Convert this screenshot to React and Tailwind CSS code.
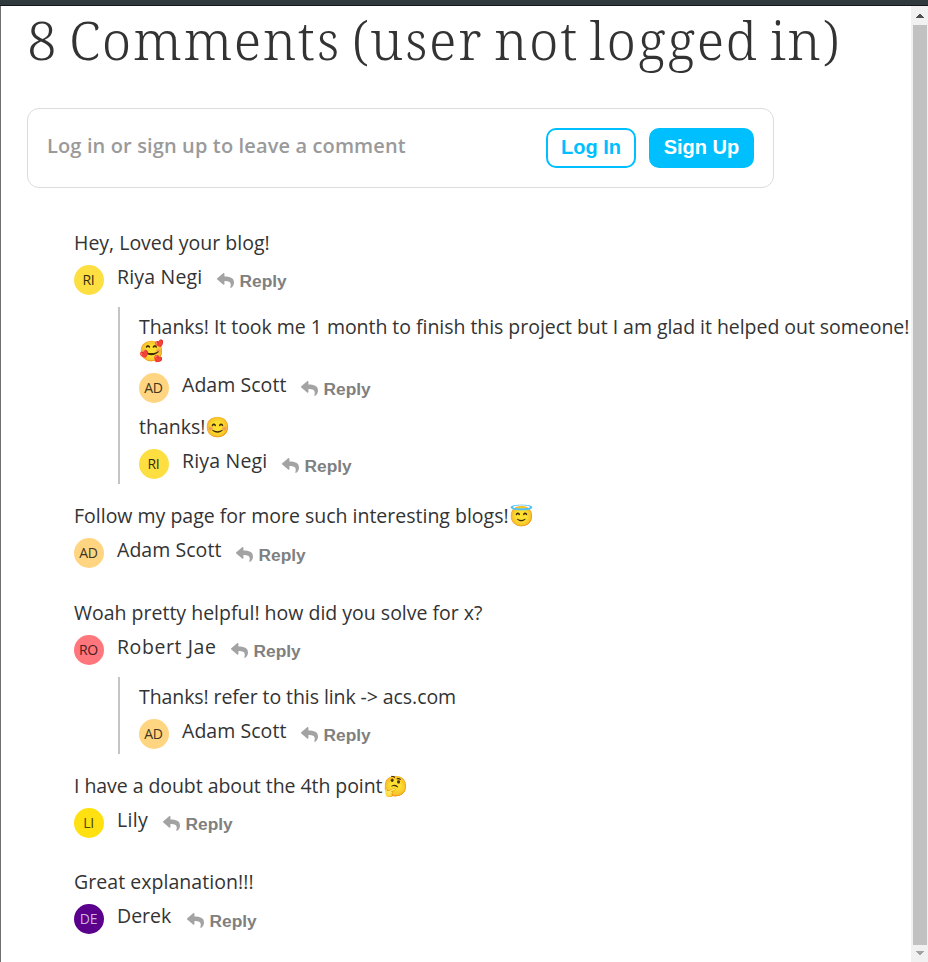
import { FaReply } from "react-icons/fa";

const people = {
  riya: { name: "Riya Negi", initials: "RI", avatar: "bg-[#fddf42] text-[#332d0d]", nameBox: "w-[85px] tracking-[0.18px]" },
  adam: { name: "Adam Scott", initials: "AD", avatar: "bg-[#ffd581] text-[#403520]", nameBox: "w-[104px] tracking-[0.05px]" },
  robert: { name: "Robert Jae", initials: "RO", avatar: "bg-[#ff767c] text-[#4a2022]", nameBox: "w-[99px] tracking-[0.58px]" },
  lily: { name: "Lily", initials: "LI", avatar: "bg-[#ffe011] text-[#4d4305]", nameBox: "w-[31px] tracking-[0.3px]" },
  derek: { name: "Derek", initials: "DE", avatar: "bg-[#5b008c] text-[#cdb3dc]", nameBox: "w-[55px]" },
};

const thread = [
  {
    by: "riya",
    text: "Hey, Loved your blog!",
    gap: "mb-5",
    replies: [
      {
        by: "adam",
        text: "Thanks! It took me 1 month to finish this project but I am glad it helped out someone!",
        spacing: "tracking-[-0.04px]",
        emoji: "🥰",
        wrap: true,
        gap: "pb-3",
      },
      { by: "riya", text: "thanks!", emoji: "😊", gap: "pb-[5px]", low: true },
    ],
  },
  {
    by: "adam",
    text: "Follow my page for more such interesting blogs!",
    emoji: "😇",
    gap: "mb-[33px]",
    low: true,
  },
  {
    by: "robert",
    text: "Woah pretty helpful! how did you solve for x?",
    gap: "mb-5",
    replies: [
      { by: "adam", text: "Thanks! refer to this link -> acs.com", spacing: "tracking-[-0.08px]", gap: "pb-[5px]" },
    ],
  },
  { by: "lily", text: "I have a doubt about the 4th point", spacing: "tracking-[-0.06px]", emoji: "🤔", gap: "mb-8" },
  { by: "derek", text: "Great explanation!!!", spacing: "tracking-[0.05px]", gap: "mb-0", low: true },
];

function Body({ comment }) {
  const person = people[comment.by];
  return (
    <>
      <p className={`whitespace-nowrap text-[19.5px] leading-6 ${comment.spacing ?? ""}`}>
        <span className={comment.wrap ? "block h-6" : ""}>{comment.text}</span>
        {comment.emoji && (
          <span className="inline-block h-6 align-top text-[20px] leading-[23px] tracking-normal">{comment.emoji}</span>
        )}
      </p>
      <div className="mt-2.5 flex h-[30px] items-start">
        <div
          className={`flex size-[30px] shrink-0 items-center justify-center rounded-full pr-px text-[14px] leading-none tracking-[-0.3px] ${person.avatar}`}
        >
          {person.initials}
        </div>
        <span className={`ml-[13px] whitespace-nowrap text-[19.5px] leading-6 ${person.nameBox}`}>{person.name}</span>
        <button
          className={`ml-[15px] flex items-start gap-[5.5px] font-['Liberation_Sans',sans-serif] text-[17.33px] font-bold leading-[18px] text-[#808080] ${comment.low ? "mt-2" : "mt-[7px]"}`}
        >
          <FaReply className="size-[17px] text-[#a3a3a3]" />
          Reply
        </button>
      </div>
    </>
  );
}

function Comment({ comment }) {
  return (
    <li className={comment.gap}>
      <Body comment={comment} />
      {comment.replies && (
        <ul className="ml-11 mt-3 flow-root border-l-2 border-[#c4c4c4] pl-[19px] pt-2">
          {comment.replies.map((reply) => (
            <li key={reply.text} className={reply.gap}>
              <Body comment={reply} />
            </li>
          ))}
        </ul>
      )}
    </li>
  );
}

function Scrollbar() {
  return (
    <div className="flex w-[17px] shrink-0 flex-col items-center bg-[#f1f1f1]">
      <svg className="h-[19px] w-[17px] shrink-0" viewBox="0 0 17 19" shapeRendering="crispEdges">
        <path d="M5 12V11L9 8L13 11V12Z" fill="#4f4f4f" />
      </svg>
      <div className="w-[14px] flex-1 bg-[#c1c1c1]" />
      <svg className="h-[17px] w-[17px] shrink-0" viewBox="0 0 17 17" shapeRendering="crispEdges">
        <path d="M5 6V7L9 10L13 7V6Z" fill="#a3a3a3" />
      </svg>
    </div>
  );
}

export default function App() {
  return (
    <div className="flex h-[962px] w-[928px] flex-col overflow-hidden bg-white font-['Open_Sans','Noto_Sans',sans-serif] text-[#333]">
      <div className="h-1.5 shrink-0 border-b border-[#17151b] bg-[#303a3d]" />
      <div className="flex min-h-0 flex-1">
        <main className="min-w-0 flex-1 border-l border-[#6f6f6f] pl-[26px]">
          <h1 className="h-[102px] whitespace-nowrap font-['Noto_Serif',serif] text-[53px] font-[350] leading-[67px] tracking-[1.65px] [word-spacing:-4.5px]">
            8 Comments (user not logged in)
          </h1>
          <section className="flex h-20 w-[747px] items-start rounded-xl border border-[#dcdcdc] px-[19px] pt-[19px]">
            <p className="flex-1 whitespace-nowrap text-[20px] font-semibold leading-9 tracking-[0.13px] text-[#9a9a9a]">
              Log in or sign up to leave a comment
            </p>
            <div className="flex gap-[13px] font-['Liberation_Sans',sans-serif] text-[20px] font-bold">
              <button className="h-10 w-[90px] rounded-[10px] border-2 border-[#00bfff] pb-0.5 leading-[34px] text-[#00bfff]">
                Log In
              </button>
              <button className="h-10 w-[105px] rounded-[10px] bg-[#00bfff] pb-0.5 leading-[38px] text-white">Sign Up</button>
            </div>
          </section>
          <ul className="ml-[47px] mt-[43px]">
            {thread.map((comment) => (
              <Comment key={comment.text} comment={comment} />
            ))}
          </ul>
        </main>
        <Scrollbar />
      </div>
    </div>
  );
}
